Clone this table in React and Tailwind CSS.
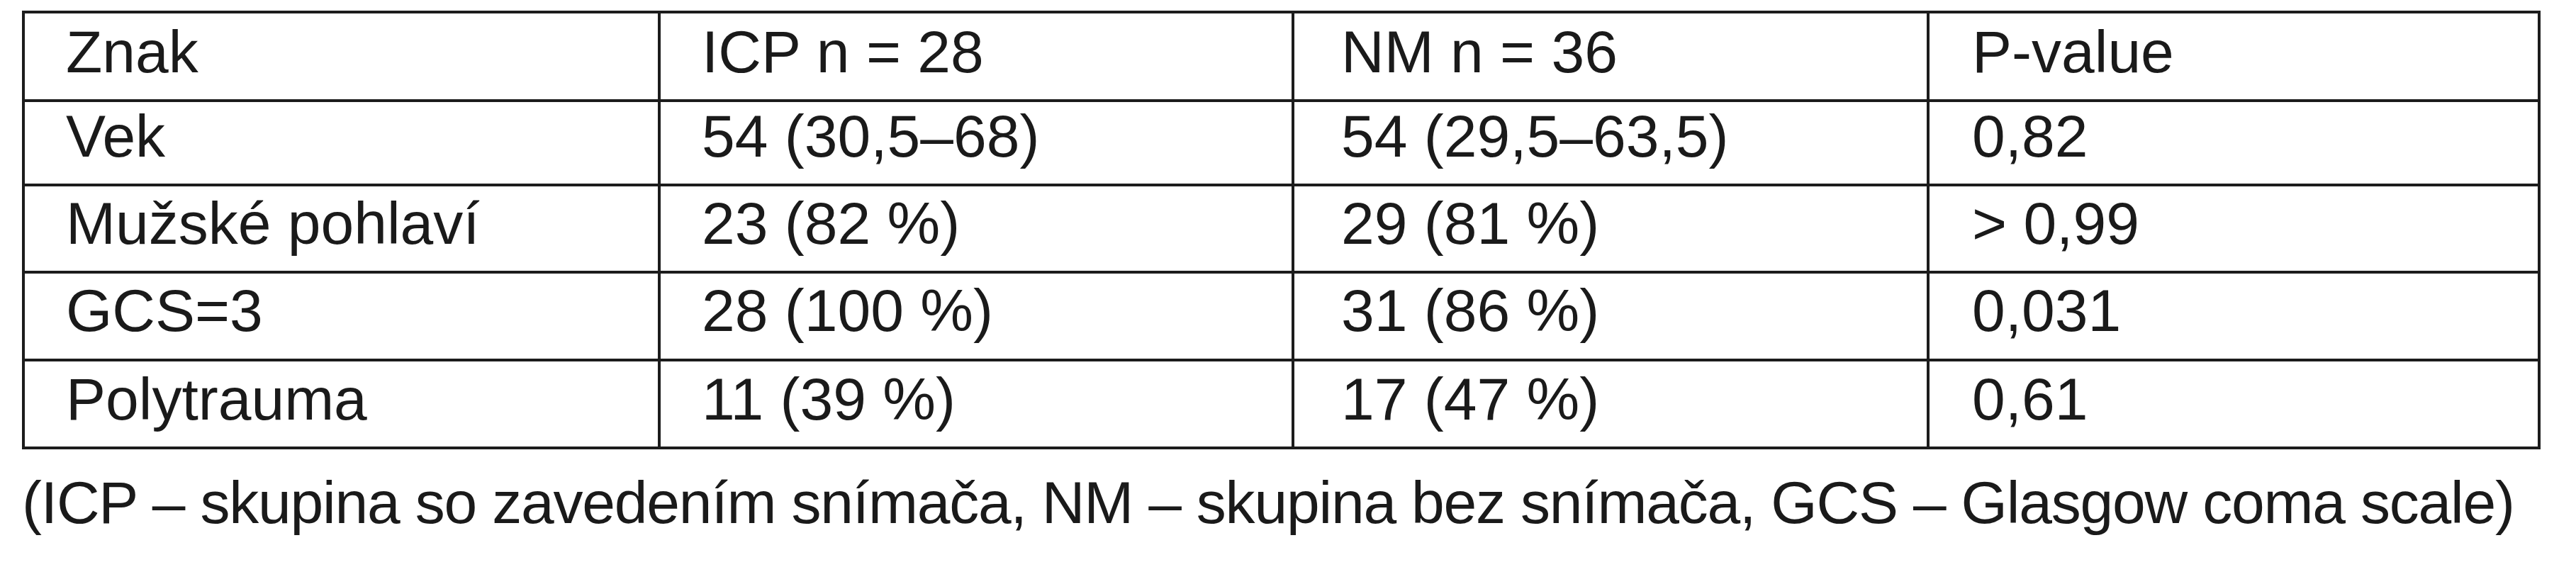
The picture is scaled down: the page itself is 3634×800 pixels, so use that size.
export default function App() {
  const rows = [
    { h: "h-[125px]", pt: "pt-[12px]", cells: ["Znak", "ICP n = 28", "NM n = 36", "P-value"] },
    { h: "h-[119px]", pt: "pt-[6px]", cells: ["Vek", "54 (30,5–68)", "54 (29,5–63,5)", "0,82"] },
    { h: "h-[123px]", pt: "pt-[10px]", cells: ["Mužské pohlaví", "23 (82 %)", "29 (81 %)", "> 0,99"] },
    { h: "h-[124px]", pt: "pt-[10px]", cells: ["GCS=3", "28 (100 %)", "31 (86 %)", "0,031"] },
    { h: "h-[124px]", pt: "pt-[11px]", cells: ["Polytrauma", "11 (39 %)", "17 (47 %)", "0,61"] },
  ];
  const pads = ["pl-[58px]", "pl-[58px]", "pl-[66px]", "pl-[60px]"];
  return (
    <div
      className="w-[3634px] h-[800px] bg-white pt-[15px] pl-[31px] text-[#1a1a1a] overflow-hidden"
      style={{ fontFamily: '"Liberation Sans", Arial, sans-serif' }}
    >
      <div className="w-[3553px] border-l-4 border-t-4 border-[#1c1c1c]">
        {rows.map((r, i) => (
          <div key={i} className={`grid grid-cols-[897px_894px_896px_862px] ${r.h}`}>
            {r.cells.map((c, j) => (
              <div
                key={j}
                className={`border-r-4 border-b-4 border-[#1c1c1c] text-[84px] leading-[84px] whitespace-nowrap ${pads[j]} ${r.pt}`}
              >
                {c}
              </div>
            ))}
          </div>
        ))}
      </div>
      <div className="mt-[33px] text-[84px] leading-[84px] tracking-[-1.2px] whitespace-nowrap">
        (ICP – skupina so zavedením snímača, NM – skupina bez snímača, GCS – Glasgow coma scale)
      </div>
    </div>
  );
}
